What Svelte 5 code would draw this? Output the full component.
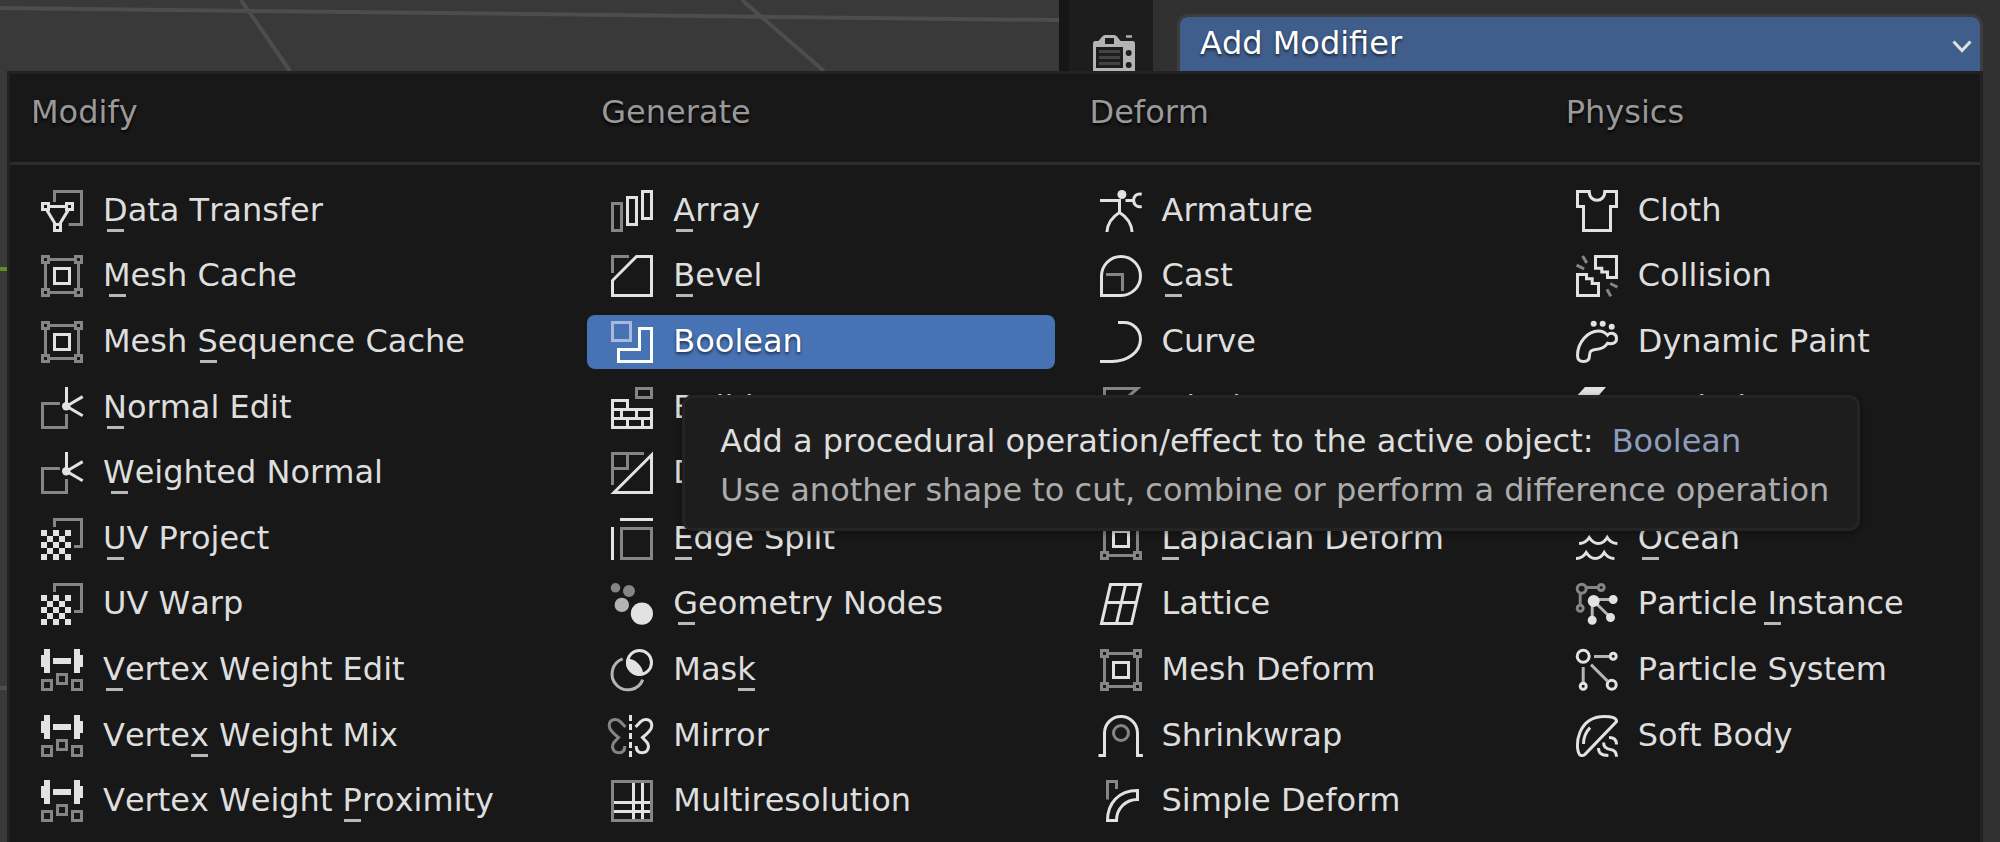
<script lang="ts">
  type Shape = { d: string; kind: "line" | "fill"; tone: "hi" | "mid" | "lo" };
  type Item = { name: string; icon: string; key?: number }; // key: index of the underlined letter

  // icons are drawn on a 14x14 grid
  const box = (x: number, y: number, w: number, h = w) => `M${x} ${y}h${w}v${h}h${-w}z`;
  const dot = (x: number, y: number, r: number) =>
    `M${x - r} ${y}a${r} ${r} 0 1 0 ${2 * r} 0a${r} ${r} 0 1 0 ${-2 * r} 0z`;

  const line = (...d: string[]): Shape => ({ d: d.join(""), kind: "line", tone: "hi" });
  const midLine = (...d: string[]): Shape => ({ d: d.join(""), kind: "line", tone: "mid" });
  const dimLine = (...d: string[]): Shape => ({ d: d.join(""), kind: "line", tone: "lo" });
  const fill = (...d: string[]): Shape => ({ d: d.join(""), kind: "fill", tone: "hi" });
  const midFill = (...d: string[]): Shape => ({ d: d.join(""), kind: "fill", tone: "mid" });
  const dimFill = (...d: string[]): Shape => ({ d: d.join(""), kind: "fill", tone: "lo" });

  const checker = Array.from({ length: 25 }, (_, i) => i)
    .filter((i) => i % 2 === 0)
    .map((i) => box((i % 5) * 2, 4 + Math.floor(i / 5) * 2, 2));

  const icons: Record<string, Shape[]> = {
    transfer: [
      dimLine("M4.5 4V.5H13.5V11.5H9.2"),
      line(box(0.5, 4.5, 2), box(8.5, 4.5, 2), box(4.5, 11.5, 2)),
      line("M2.5 5.5H8.5M2 6.8L4.8 11.4M9 6.8L6.2 11.4"),
    ],
    cage: [
      dimLine(box(0.5, 0.5, 2), box(11.5, 0.5, 2), box(0.5, 11.5, 2), box(11.5, 11.5, 2)),
      dimLine("M2.5 1.5H11.5M2.5 12.5H11.5M1.5 2.5V11.5M12.5 2.5V11.5"),
      line(box(4.5, 4.5, 5)),
    ],
    normal: [
      dimLine("M6.3 5.5H.5V13.5H8.5V9"),
      line("M8.5 0V6.4L13.9 3.2M8.5 6.4L13.9 9.6"),
      fill(dot(8.4, 6.4, 1.4)),
    ],
    uv: [dimLine("M4.5 3V.5H13.5V9.5H11"), fill(...checker)],
    weight: [
      fill(box(1, 0, 2, 8), box(0, 2, 1.2, 4), box(4, 3, 6, 2), box(11, 0, 2, 8), box(12.8, 2, 1.2, 4)),
      dimLine(box(0.5, 10.5, 3), box(5.5, 8.5, 3), box(10.5, 10.5, 3)),
    ],
    array: [dimLine(box(0.5, 4.5, 3, 9)), line(box(5.5, 2.5, 3, 9), box(10.5, 0.5, 3, 9))],
    bevel: [dimLine("M.5 6V.5H6"), line("M8.5 .5H13.5V13.5H.5V8.5Z")],
    boolean: [dimLine(box(0.5, 0.5, 6)), line("M9.5 2.5H13.5V13.5H2.5V9.5H9.5Z")],
    build: [
      dimLine(box(8.5, 0.5, 5, 3)),
      line("M.5 7.5V4.5H5.5V7.5", box(0.5, 7.5, 13, 6), "M.5 10.5H13.5M3.5 7.5V10.5M8.5 7.5V10.5M5.5 10.5V13.5M10.5 10.5V13.5"),
    ],
    decimate: [dimLine("M.5 11V.5H11M.5 5.5H5.5V.5"), line("M13.5 1V13.5H1Z")],
    split: [line("M3 .5H14M.5 3V14"), dimLine(box(3.5, 3.5, 10))],
    nodes: [
      dimFill(dot(1.5, 1.6, 1.6), dot(6, 2.7, 2)),
      midFill(dot(3.6, 7.3, 2.4)),
      fill(dot(10.3, 10.2, 3.7)),
    ],
    mask: [
      midLine("M3.9 3.3A5.3 5.3 0 1 0 10.6 10.2"),
      line(dot(9.5, 4.5, 4)),
      fill("M5.3 3.2A5.8 5.8 0 0 1 10.8 8.5A4.2 4.2 0 0 1 5.3 3.2Z"),
    ],
    mirror: [
      dimLine("M4.8 4L3.2 2.3C1.8 .9-.6 1.4-.6 3.6C-.6 5 .8 6.2 2.5 7.5L1.3 8.8C-.1 10.2 .5 12.6 2.6 12.6C4 12.6 4.6 11.6 4.6 10.3"),
      line("M8.2 4L9.8 2.3C11.2 .9 13.6 1.4 13.6 3.6C13.6 5 12.2 6.2 10.5 7.5L11.7 8.8C13.1 10.2 12.5 12.6 10.4 12.6C9 12.6 8.4 11.6 8.4 10.3"),
      fill(box(6, 0, 1, 2), box(6, 3, 1, 2), box(6, 6, 1, 2), box(6, 9, 1, 2), box(6, 12, 1, 2)),
    ],
    multires: [dimLine(box(0.5, 0.5, 13)), line("M7.5 1V13M10.5 1V13M1 7.5H13M1 10.5H13")],
    armature: [
      fill(dot(7.3, 1.5, 1.5)),
      line("M0 3.5H6.5V7.5M2.3 14C2.5 11.5 4 9 6.5 7.5C9 9 10.5 11.5 10.7 14"),
      line("M8.5 3.5H11M13.9 1.4C10.3 .6 10.3 6.3 13.9 5.5"),
    ],
    cast: [line("M.5 13.5V7A6.5 6.5 0 1 1 7 13.5Z"), dimLine("M2 6.5H7.5V12")],
    curve: [line("M6 .5H8A5.5 5.5 0 0 1 13.5 6C13.5 10.5 9 13.5 4 13.5H0")],
    displace: [dimLine("M1.5 12V.5H12.5L8.5 4")],
    hook: [line("M7 1V9A3 3 0 1 1 4 6"), dimLine(box(9.5, 9.5, 4))],
    lattice: [line("M3.5 .5H13.5L10.5 13.5H.5ZM2 6.5H12M8.5 .5L5.5 13.5")],
    shrinkwrap: [line("M-.5 13.5H1.5V6A5.5 5.5 0 0 1 12.5 6V13.5H14.3"), dimLine(dot(7, 6, 2.5))],
    simple: [
      dimLine("M2.5 6.5V.5H5.5V3"),
      line("M2.5 13.5C2.5 8 6 3.5 12.5 3.5V6.5C8.5 6.5 5.5 9.5 5.5 13.5Z"),
    ],
    cloth: [line("M.5 .5H4.4C4.4 4.4 9.6 4.4 9.6 .5H13.5V5.5H11.5V13.5H2.5V5.5H.5Z")],
    collision: [
      line("M6.5 .5H13.5V7.5H10.5V5.7H8.6V4.4H6.5ZM.5 6.5H3.5V7.9H5.4V9.5H7.5V13.5H.5Z"),
      dimLine("M2.2 .3L3.6 2.7M.2 3.4L2.7 4.6M11.4 9.5L13.8 10.7M10.3 11.4L11.6 13.8"),
    ],
    paint: [
      fill(dot(5.9, 0.9, 1), dot(8.9, 0.9, 1), dot(11.9, 1.9, 1)),
      line("M.5 11.5C.5 7 4 3.3 7.5 3.3C9 3.3 9.8 3.8 10.5 4.7C11.5 3.6 13.5 4 13.5 5.8C13.5 7.4 12 7.8 10.5 7.4C9.5 9 8 9.4 6.5 9.5C5 9.6 4.5 10.2 4.5 11.5C4.5 12.8 3.8 13.5 2.5 13.5C1.2 13.5 .5 12.7 .5 11.5Z"),
    ],
    explode: [fill("M3 0H10L7 3.5H-.2Z"), dimLine(box(1.5, 6.5, 7))],
    fluid: [line("M7 1C10 5 12 7 12 9.5A5 4.5 0 0 1 2 9.5C2 7 4 5 7 1Z")],
    ocean: [
      line("M0 3.5C1.6 3.5 2.6 2.8 3.4 1.5C4.3 2.9 5 3.5 6.4 3.5C7.8 3.5 8.6 2.9 9.4 1.5C10.2 2.8 11.2 3.5 12.8 3.5"),
      line("M1 8.5C2.6 8.5 3.6 7.8 4.4 6.5C5.3 7.9 6 8.5 7.4 8.5C8.8 8.5 9.6 7.9 10.4 6.5C11.2 7.8 12.2 8.5 13.8 8.5"),
      line("M0 13.5C1.6 13.5 2.6 12.8 3.4 11.5C4.3 12.9 5 13.5 6.4 13.5C7.8 13.5 8.6 12.9 9.4 11.5C10.2 12.8 11.2 13.5 12.8 13.5"),
    ],
    instance: [
      dimLine(dot(1.9, 1.9, 1.5), dot(8.4, 1.5, 1), dot(1.4, 8.4, 1), "M3.4 1.5H7.4M1.4 3.4V7.4"),
      midLine("M5.9 5.5H12M5.4 6V12M5.9 6L11.5 11.5"),
      fill(dot(5.9, 6, 2), dot(12.4, 5.5, 1.5), dot(11.5, 11.5, 1.5), dot(5.4, 12.4, 1.5)),
    ],
    particles: [
      line(dot(2.4, 2.4, 2), dot(12.4, 2.4, 1), dot(11.9, 11.9, 1.5), dot(2.4, 12.4, 1)),
      midLine("M6 2.5H11M2.4 6V11M5 5.2L10.6 10.8"),
    ],
    soft: [
      line("M1.2 13.2C-.6 10.5 .5 .5 9.5 .5C12 .5 13.6 1 13.5 2.2L3 13.1C2.4 13.6 1.6 13.7 1.2 13.2Z"),
      line("M2.5 9.7C2.5 7.5 3.2 5.7 4.7 4.2"),
      line("M11 7.5C12.8 7.5 13.5 8.3 13.5 9.8M9.2 9.2C9.2 11 10.3 11.4 11.5 11.5C13 11.7 13.5 12.5 13.5 13.9M7.5 11C7.5 12.8 8.5 13.5 10.8 13.5"),
    ],
  };

  const columns: { title: string; items: Item[] }[] = [
    {
      title: "Modify",
      items: [
        { name: "Data Transfer", icon: "transfer", key: 0 },
        { name: "Mesh Cache", icon: "cage", key: 0 },
        { name: "Mesh Sequence Cache", icon: "cage", key: 5 },
        { name: "Normal Edit", icon: "normal", key: 0 },
        { name: "Weighted Normal", icon: "normal", key: 0 },
        { name: "UV Project", icon: "uv", key: 0 },
        { name: "UV Warp", icon: "uv" },
        { name: "Vertex Weight Edit", icon: "weight", key: 0 },
        { name: "Vertex Weight Mix", icon: "weight", key: 5 },
        { name: "Vertex Weight Proximity", icon: "weight", key: 14 },
      ],
    },
    {
      title: "Generate",
      items: [
        { name: "Array", icon: "array", key: 0 },
        { name: "Bevel", icon: "bevel", key: 0 },
        { name: "Boolean", icon: "boolean" },
        { name: "Build", icon: "build" },
        { name: "Decimate", icon: "decimate" },
        { name: "Edge Split", icon: "split", key: 0 },
        { name: "Geometry Nodes", icon: "nodes", key: 0 },
        { name: "Mask", icon: "mask", key: 3 },
        { name: "Mirror", icon: "mirror" },
        { name: "Multiresolution", icon: "multires" },
      ],
    },
    {
      title: "Deform",
      items: [
        { name: "Armature", icon: "armature" },
        { name: "Cast", icon: "cast", key: 0 },
        { name: "Curve", icon: "curve" },
        { name: "Displace", icon: "displace" },
        { name: "Hook", icon: "hook" },
        { name: "Laplacian Deform", icon: "cage", key: 0 },
        { name: "Lattice", icon: "lattice" },
        { name: "Mesh Deform", icon: "cage" },
        { name: "Shrinkwrap", icon: "shrinkwrap" },
        { name: "Simple Deform", icon: "simple" },
      ],
    },
    {
      title: "Physics",
      items: [
        { name: "Cloth", icon: "cloth" },
        { name: "Collision", icon: "collision" },
        { name: "Dynamic Paint", icon: "paint" },
        { name: "Explode", icon: "explode" },
        { name: "Fluid", icon: "fluid" },
        { name: "Ocean", icon: "ocean", key: 0 },
        { name: "Particle Instance", icon: "instance", key: 9 },
        { name: "Particle System", icon: "particles" },
        { name: "Soft Body", icon: "soft" },
      ],
    },
  ];

  const tips: Record<string, string> = {
    Boolean: "Use another shape to cut, combine or perform a difference operation",
  };

  let active = $state("Boolean");
  let open = $state(true);
</script>

<div class="editor">
  <div class="viewport">
    <svg class="grid" aria-hidden="true">
      <path d="M0 8L1400 24M241 0L290 71M742 0L824 71M0 688H12" />
      <path class="axis" d="M0 269H12" />
    </svg>
  </div>
  <div class="gutter"></div>
  <nav class="tabs">
    <button class="tab" aria-label="Render">
      <svg viewBox="0 0 14 14">
        <path
          fill-rule="evenodd"
          d="M0 2.8Q0 2 .8 2H1.8L3.1.5Q3.5 0 4 0H7Q7.7 0 8 .5L9.2 2H13.2Q14 2 14 2.8V14H0ZM4 1V3H7V1ZM1 4V11H10V4ZM10.9 6a1 1 0 1 0 2 0a1 1 0 1 0-2 0zM10.9 10a1 1 0 1 0 2 0a1 1 0 1 0-2 0z"
        />
        <path d="M11 .1H13V.9H11Z" />
        <path class="rows" d="M2 5.5H9M2 7.5H9M2 9.5H9" />
      </svg>
    </button>
  </nav>
  <section class="props">
    <button class="dropdown" aria-haspopup="menu" aria-expanded={open} onclick={() => (open = !open)}>
      <span>Add Modifier</span>
      <svg viewBox="0 0 20 14" aria-hidden="true"><path d="M1.5 1.5L10 10.5L18.5 1.5" /></svg>
    </button>
  </section>
</div>

{#if open}
  <div class="menu">
    <div class="columns head">
      {#each columns as col}
        <h2>{col.title}</h2>
      {/each}
    </div>
    <div class="columns body">
      {#each columns as col}
        <ul role="menu" aria-label={col.title}>
          {#each col.items as item (item.name)}
            <li role="none">
              <button
                class="item"
                class:active={item.name === active}
                role="menuitem"
                onpointerenter={() => (active = item.name)}
              >
                <svg class="icon" viewBox="0 0 14 14" aria-hidden="true">
                  {#each icons[item.icon] as s}
                    <path class="{s.kind} {s.tone}" d={s.d} />
                  {/each}
                </svg>
                <span class="label">
                  {#if item.key !== undefined}
                    {item.name.slice(0, item.key)}<span class="key">{item.name[item.key]}</span>{item.name.slice(item.key + 1)}
                  {:else}
                    {item.name}
                  {/if}
                </span>
              </button>
              {#if item.name === active && tips[item.name]}
                <div class="tip" role="tooltip">
                  <p>Add a procedural operation/effect to the active object: <span class="value">{item.name}</span></p>
                  <p class="more">{tips[item.name]}</p>
                </div>
              {/if}
            </li>
          {/each}
        </ul>
      {/each}
    </div>
  </div>
{/if}

<style>
  :global(body) {
    margin: 0;
    overflow: hidden;
    background: #303030;
    font: 32px/40px "DejaVu Sans", Verdana, sans-serif;
    font-kerning: none;
    color: #dedede;
  }
  button {
    border: none;
    background: none;
    padding: 0;
    font: inherit;
    font-kerning: none;
    color: inherit;
    text-align: left;
  }
  .editor {
    display: grid;
    grid-template-columns: 1059fr 10px 84px 847fr;
    min-height: 100vh;
  }
  .viewport {
    background: #393939;
  }
  .grid {
    display: block;
    width: 100%;
    height: 100%;
    fill: none;
    stroke: #4d4d4d;
    stroke-width: 4;
  }
  .grid .axis {
    stroke: #648c29;
  }
  .gutter {
    background: #161616;
  }
  .tabs {
    background: #1d1d1d;
    padding: 35px 0 0 24px;
  }
  .tab {
    display: block;
  }
  .tab svg {
    display: block;
    width: 42px;
    height: 42px;
    fill: #b4b4b4;
  }
  .tab .rows {
    stroke: #444;
    stroke-width: 1;
  }
  .props {
    padding: 14px 17px 0 24px;
  }
  .dropdown {
    display: flex;
    align-items: center;
    justify-content: space-between;
    box-sizing: border-box;
    width: 100%;
    height: 60px;
    padding: 0 8px 3px 20px;
    border: 3px solid #3d3d3d;
    border-radius: 11px 11px 0 0;
    background: #405e8c;
    background-clip: padding-box;
    color: #fff;
    text-shadow: 0 2px 3px rgba(0, 0, 0, 0.6);
  }
  .dropdown svg {
    width: 20px;
    height: 14px;
    margin-top: 8px;
    fill: none;
    stroke: #e0e0e0;
    stroke-width: 3;
  }

  .menu {
    position: absolute;
    inset: 71px 17px 0 7px;
    display: flex;
    flex-direction: column;
    background: #181818;
    border: 3px solid #222;
    border-bottom: none;
  }
  .columns {
    display: grid;
    grid-template-columns: 549fr 467fr 455fr 422fr;
    column-gap: 21px;
    padding: 0 6px 0 7px;
  }
  .head {
    border-bottom: 3px solid #2c2c2c;
  }
  h2 {
    margin: 0;
    padding: 18px 0 30px 14px;
    font: inherit;
    color: #999;
    text-shadow: 0 2px 3px #000;
  }
  .body {
    flex: 1;
    padding-top: 13px;
    padding-bottom: 8px;
  }
  ul {
    display: grid;
    grid-template-rows: repeat(10, 1fr);
    margin: 0;
    padding: 0;
    list-style: none;
  }
  li {
    position: relative;
    display: flex;
    align-items: center;
  }
  .item {
    display: flex;
    align-items: center;
    flex: 1;
    gap: 20px;
    padding: 7px 24px;
    border-radius: 8px;
    white-space: nowrap;
    --hi: #e2e2e2;
    --mid: #b4b4b4;
    --lo: #858585;
  }
  .item.active {
    background: #4772b3;
    color: #fff;
    text-shadow: 0 2px 3px rgba(0, 0, 0, 0.6);
    --hi: #fff;
    --lo: #a6bbdc;
  }
  .icon {
    flex: none;
    width: 42px;
    height: 42px;
    margin: -1px 0;
    overflow: visible;
  }
  .line {
    fill: none;
    stroke: var(--tone);
    stroke-width: 1;
  }
  .fill {
    fill: var(--tone);
  }
  .hi {
    --tone: var(--hi);
  }
  .mid {
    --tone: var(--mid);
  }
  .lo {
    --tone: var(--lo);
  }
  .label {
    line-height: 38px;
    padding-bottom: 2px;
  }
  .key {
    position: relative;
  }
  .key::after {
    content: "";
    position: absolute;
    left: 50%;
    bottom: -3px;
    width: 17px;
    height: 3px;
    margin-left: -8px;
    background: #b8b8b8;
  }

  .tip {
    position: absolute;
    z-index: 1;
    top: 86px;
    left: 95px;
    padding: 19px 28px 13px 35px;
    border: 3px solid #242424;
    border-radius: 11px;
    background: #1d1d1d;
    box-shadow: 0 2px 6px rgba(0, 0, 0, 0.4);
    white-space: nowrap;
  }
  .tip p {
    margin: 0;
    line-height: 49px;
  }
  .tip .value {
    margin-left: 8px;
    color: #8c9cbc;
  }
  .tip .more {
    color: #acacac;
  }
</style>
